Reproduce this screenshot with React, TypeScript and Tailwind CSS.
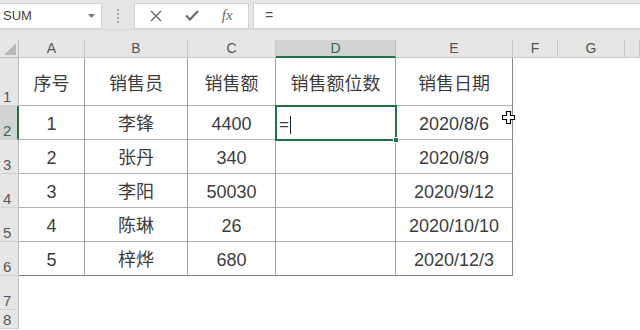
import React from 'react'

const cols = ['A', 'B', 'C', 'D', 'E', 'F', 'G', '']
const headers = ['序号', '销售员', '销售额', '销售额位数', '销售日期']
const rows: string[][] = [
  ['1', '李锋', '4400', '', '2020/8/6'],
  ['2', '张丹', '340', '', '2020/8/9'],
  ['3', '李阳', '50030', '', '2020/9/12'],
  ['4', '陈琳', '26', '', '2020/10/10'],
  ['5', '梓烨', '680', '', '2020/12/3'],
]

const font = { fontFamily: '"Liberation Sans", "Noto Sans CJK SC", sans-serif' }

function RowHead({ n, active = false }: { n: number; active?: boolean }) {
  return (
    <div
      className={`flex items-end pl-[3px] pb-[1px] text-[15px] leading-none border-b border-[#d0d0d0] ${
        active ? 'bg-[#d3d3d3] text-[#2f6b4b] border-r-2 border-r-[#217346]' : 'bg-[#e6e6e6] text-[#555] border-r border-r-[#bdbdbd]'
      }`}
    >
      {n}
    </div>
  )
}

function Cell({ children, last, bottom, head }: { children?: React.ReactNode; last?: boolean; bottom?: boolean; head?: boolean }) {
  return (
    <div
      className={`flex items-center justify-center text-[18px] text-[#3d3d3d] border-r border-b ${head ? 'pt-[6px]' : 'pt-[4px]'} ${
        bottom ? 'border-b-[#7d7d7d]' : 'border-b-[#b0b0b0]'
      } ${last ? 'border-r-[#8a8a8a]' : 'border-r-[#a4a4a4]'}`}
    >
      {children}
    </div>
  )
}

export default function App() {
  return (
    <div className="w-[640px] h-[330px] overflow-hidden bg-white relative" style={font}>
      {/* formula bar */}
      <div className="h-[30px] bg-[#e6e6e6] border-b border-[#d9d9d9] flex items-center pt-[2px]">
        <div className="w-[102px] h-[26px] bg-white border border-[#d4d4d4] border-l-0 flex items-center justify-between pl-[3px] pr-[6px]">
          <span className="text-[13px] text-[#444]">SUM</span>
          <svg width="7" height="4" viewBox="0 0 7 4">
            <path d="M0 0H7L3.5 4Z" fill="#777" />
          </svg>
        </div>
        <div className="w-[32px] flex flex-col items-center gap-[2px]">
          <span className="w-[2px] h-[2px] bg-[#a8a8a8]" />
          <span className="w-[2px] h-[2px] bg-[#a8a8a8]" />
          <span className="w-[2px] h-[2px] bg-[#a8a8a8]" />
          <span className="w-[2px] h-[2px] bg-[#a8a8a8]" />
        </div>
        <div className="w-[115px] h-[26px] bg-white border border-[#d4d4d4] flex items-center justify-around px-[4px]">
          <svg width="12" height="12" viewBox="0 0 12 12">
            <path d="M1 1L11 11M11 1L1 11" stroke="#6a6a6a" strokeWidth="1.4" />
          </svg>
          <svg width="14" height="11" viewBox="0 0 14 11">
            <path d="M1 5.5L5 9.5L13 1" stroke="#6a6a6a" strokeWidth="2.2" fill="none" />
          </svg>
          <span className="text-[15px] italic text-[#6a6a6a]" style={{ fontFamily: '"Liberation Serif", serif' }}>
            fx
          </span>
        </div>
        <div className="ml-[4px] flex-1 h-[26px] bg-white border border-[#d4d4d4] border-r-0 flex items-center pl-[11px]">
          <span className="text-[14px] text-[#555]">=</span>
        </div>
      </div>
      <div className="h-[10px] bg-[#e6e6e6]" />

      {/* sheet */}
      <div className="grid grid-cols-[19px_66px_103px_88px_120px_117px_45px_67px_1fr] grid-rows-[18px_48px_repeat(6,34px)_19px]">
        <div className="bg-[#e6e6e6] border-r border-b border-[#bdbdbd] flex items-end justify-end pr-[2px] pb-[2px]">
          <svg width="12" height="12" viewBox="0 0 12 12">
            <path d="M12 0V12H0Z" fill="#b8b8b8" />
          </svg>
        </div>
        {cols.map((c, i) =>
          c === 'D' ? (
            <div
              key={i}
              className="bg-[#d3d3d3] border-r border-[#bdbdbd] border-b-2 border-b-[#217346] flex items-center justify-center text-[14px] text-[#2f6b4b]"
            >
              {c}
            </div>
          ) : (
            <div
              key={i}
              className="bg-[#e6e6e6] border-r border-b border-[#c8c8c8] flex items-center justify-center text-[14px] text-[#555]"
            >
              {c}
            </div>
          )
        )}

        <RowHead n={1} />
        {headers.map((h, i) => (
          <Cell key={i} last={i === 4} head>
            {h}
          </Cell>
        ))}
        <div />
        <div />
        <div />

        {rows.map((r, ri) => (
          <React.Fragment key={ri}>
            <RowHead n={ri + 2} active={ri === 0} />
            {r.map((v, ci) => (
              <Cell key={ci} last={ci === 4} bottom={ri === 4}>
                {v}
              </Cell>
            ))}
            <div />
            <div />
            <div />
          </React.Fragment>
        ))}

        <RowHead n={7} />
        <div className="col-span-8" />
        <RowHead n={8} />
        <div className="col-span-8" />
      </div>

      {/* active cell D2 */}
      <div className="absolute left-[275px] top-[105px] w-[122px] h-[36px] border-2 border-[#217346] flex items-center pl-[2px] pt-[3px]">
        <span className="text-[17px] text-[#3d3d3d] leading-none">=</span>
        <span className="w-[1px] h-[18px] bg-[#222] ml-[1px]" />
        <span className="absolute -right-[4px] -bottom-[4px] w-[6px] h-[6px] bg-[#217346] border border-white" />
      </div>

      {/* mouse cursor */}
      <svg className="absolute left-[502px] top-[111px]" width="14" height="14" viewBox="0 0 14 14">
        <path d="M4.5 0.5H8.5V4.5H12.5V8.5H8.5V12.5H4.5V8.5H0.5V4.5H4.5Z" fill="#fff" stroke="#000" strokeWidth="1.2" />
      </svg>
    </div>
  )
}
